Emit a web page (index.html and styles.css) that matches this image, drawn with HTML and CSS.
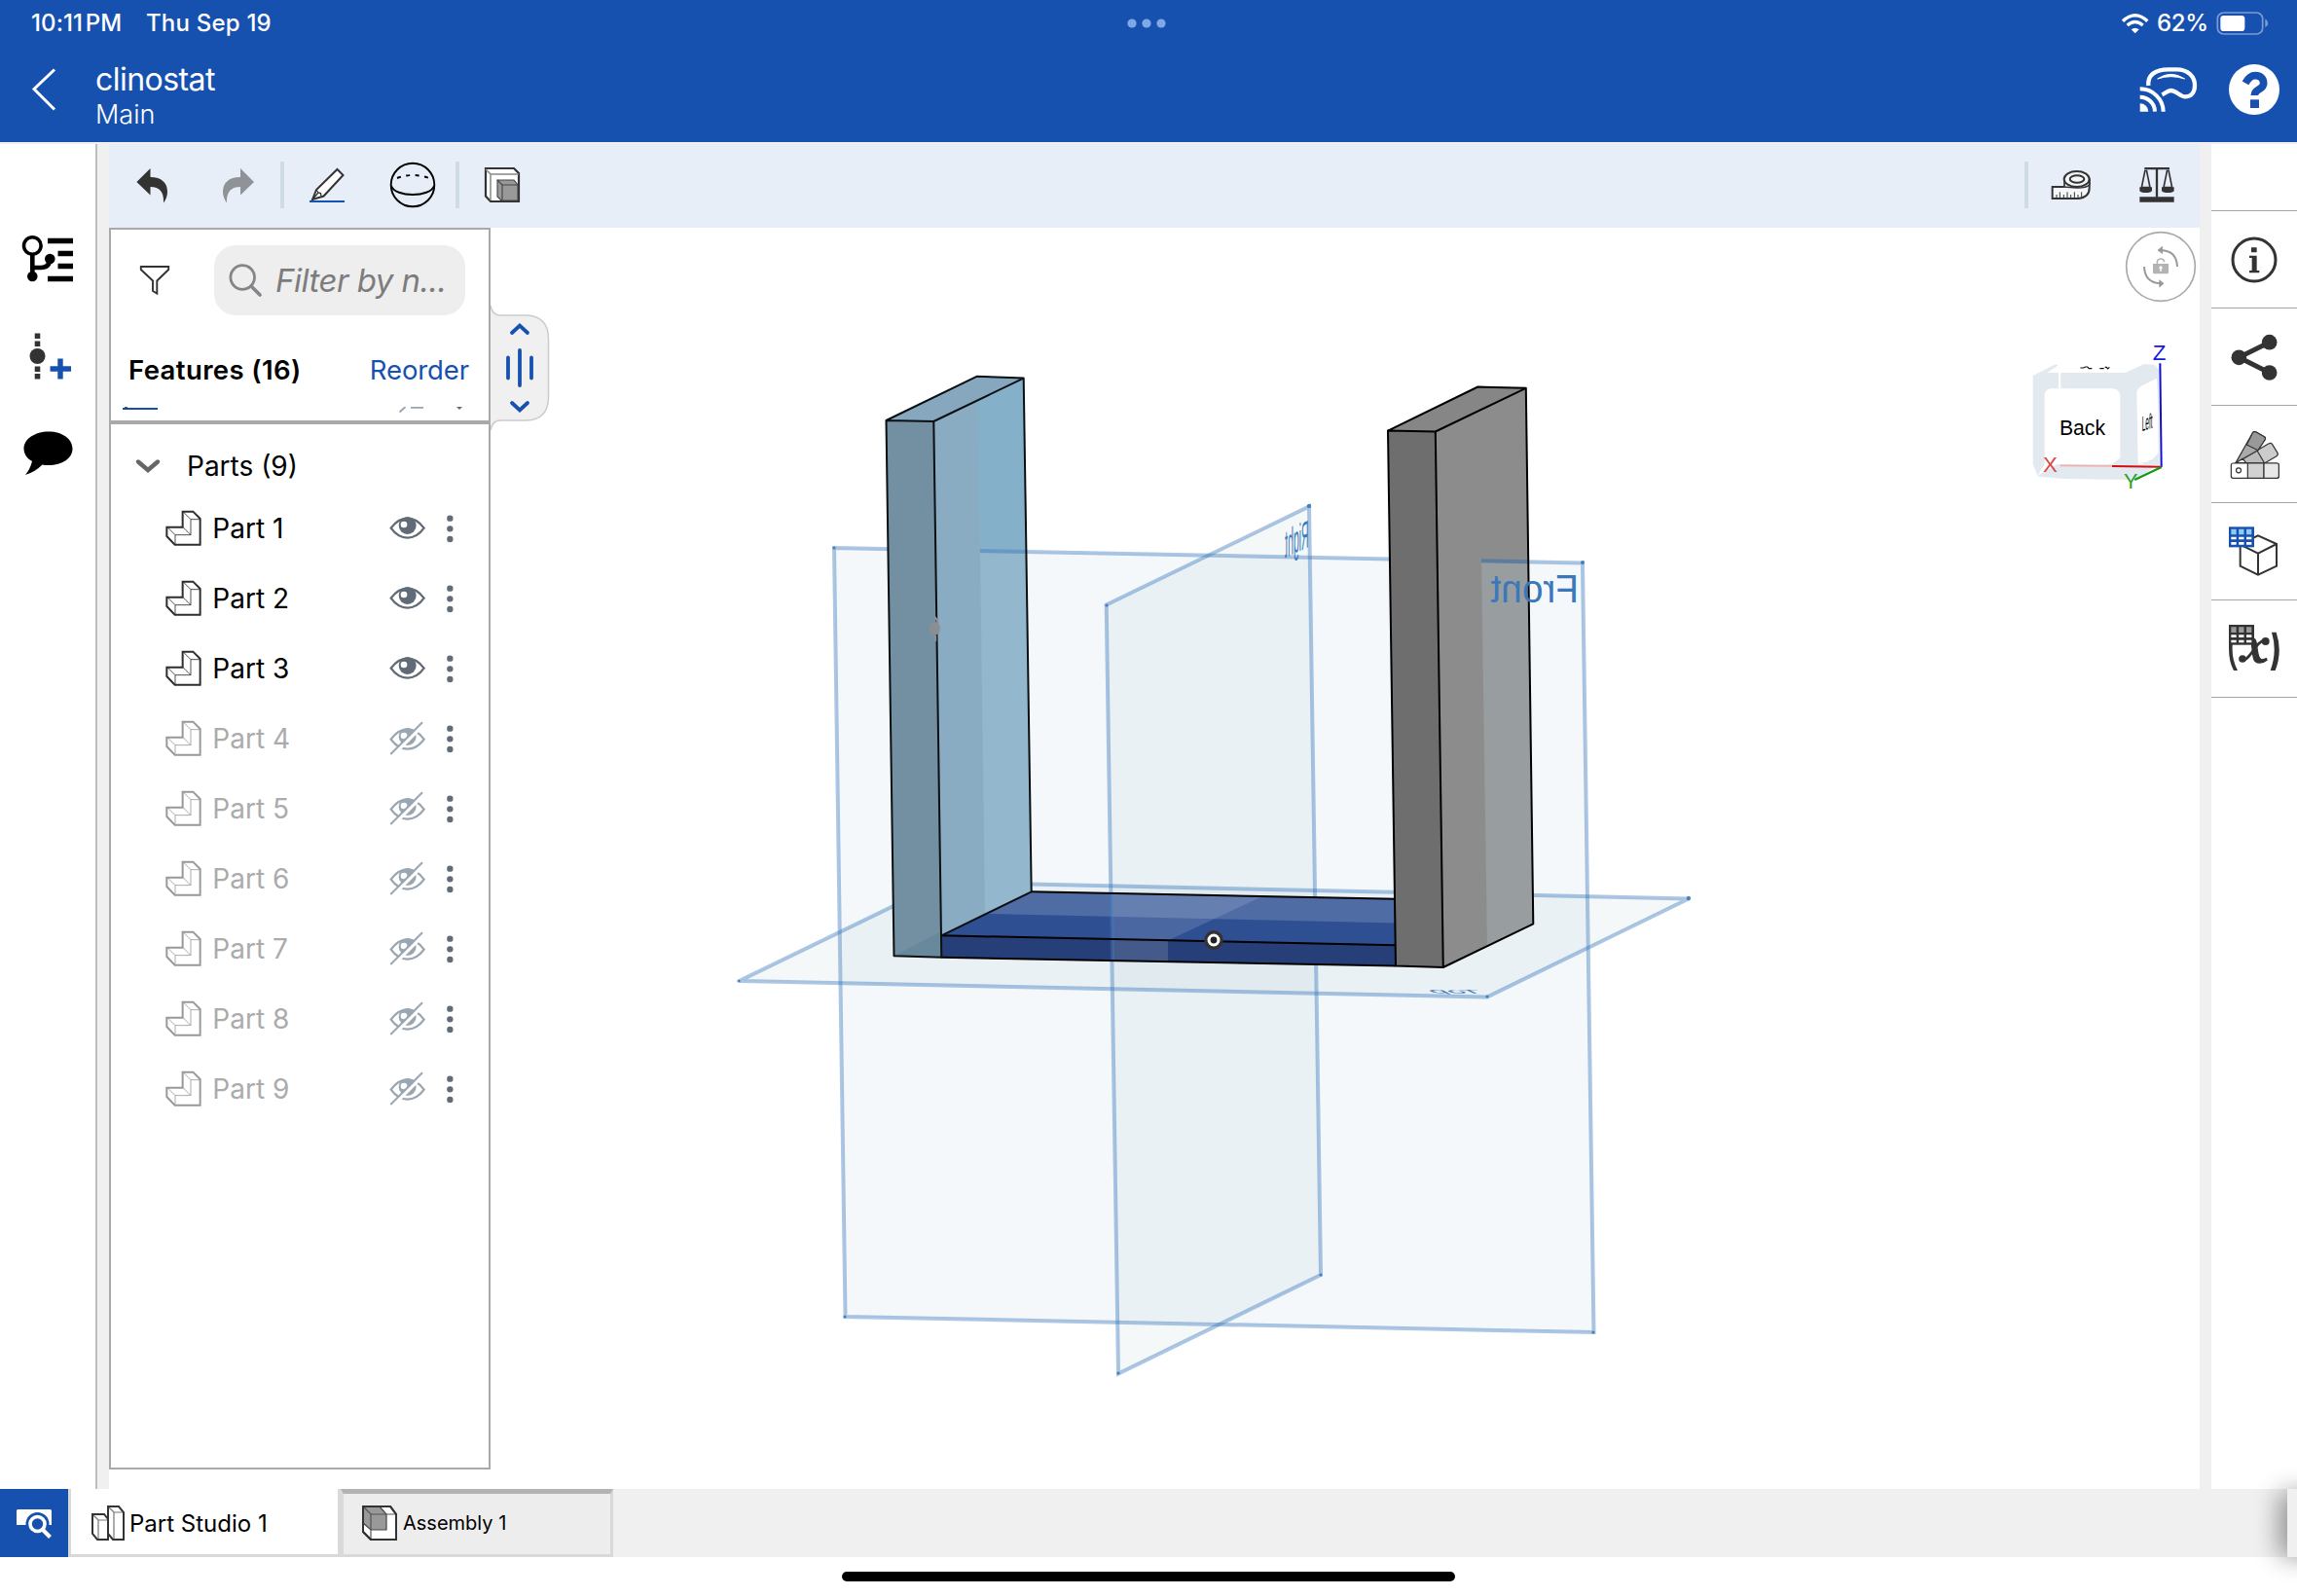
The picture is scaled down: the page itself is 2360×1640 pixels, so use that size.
FILE: index.html
```html
<!DOCTYPE html>
<html lang="en">
<head>
<meta charset="utf-8">
<title>clinostat</title>
<link rel="stylesheet" href="styles.css">
</head>
<body>
<svg class="defs" width="0" height="0">
  <symbol id="part" viewBox="208 250 112 112">
    <path d="M212 303H261V255H293L315 277V357H237L212 331Z" fill="#fff" stroke="currentColor" stroke-width="6"/>
    <path d="M214 303L238 327H286M238 327V355M262 303L286 327M286 327V279H314M286 279L263 256" fill="none" stroke="currentColor" stroke-width="2.5"/>
  </symbol>
  <symbol id="eye" viewBox="898 250 112 112">
    <path d="M903 306Q925 276 954 276T1005 306Q983 336 954 336T903 306Z" fill="#fff" stroke="currentColor" stroke-width="7"/>
    <circle cx="954" cy="298" r="27" fill="currentColor"/>
    <circle cx="943" cy="295" r="10" fill="#fff"/>
  </symbol>
  <symbol id="eye-off" viewBox="898 898 112 112">
    <path d="M903 957Q925 926 954 926T1005 957Q983 987 954 987T903 957Z" fill="#fff" stroke="currentColor" stroke-width="7"/>
    <circle cx="954" cy="949" r="27" fill="currentColor"/>
    <circle cx="943" cy="946" r="10" fill="#fff"/>
    <path d="M907 1009L1006 910" stroke="#fff" stroke-width="10"/>
    <path d="M902 1003L1000 905" stroke="currentColor" stroke-width="6"/>
  </symbol>
  <symbol id="more" viewBox="1070 260 32 92">
    <g fill="#626c78"><circle cx="1086" cy="274" r="9.5"/><circle cx="1086" cy="306" r="9.5"/><circle cx="1086" cy="338" r="9.5"/></g>
  </symbol>
</svg>

<div class="app">
  <header class="header">
    <div class="status">
      <span class="time">10:11 PM</span>
      <span class="date">Thu Sep 19</span>
      <svg class="multitask" width="44" height="12" viewBox="0 0 44 12"><g fill="#7ea8e6"><circle cx="6" cy="6" r="4.600"/><circle cx="21" cy="6" r="4.600"/><circle cx="36" cy="6" r="4.600"/></g></svg>
      <div class="status-end">
        <svg width="30" height="22" viewBox="356 38 88 66">
          <g fill="none" stroke="#fff"><path d="M361 64Q399 28 437 64" stroke-width="10"/><path d="M375 77Q399 56 423 77" stroke-width="10"/></g>
          <path d="M387 90Q399 80 411 90L399 102Z" fill="#fff"/>
        </svg>
        <span class="percent">62%</span>
        <svg width="54" height="24" viewBox="650 36 162 72">
          <rect x="654" y="39" width="139" height="66" rx="19" fill="none" stroke="#7a9cd4" stroke-width="5"/>
          <rect x="663" y="48" width="75" height="48" rx="10" fill="#fff"/>
          <path d="M801 58Q810 64 810 72T801 85Z" fill="#7a9cd4"/>
        </svg>
      </div>
    </div>
    <div class="titlebar">
      <svg class="back" width="28" height="52" viewBox="32 66 28 52"><path d="M56 71.500L35 91.500L56 112.500" fill="none" stroke="#fff" stroke-width="3"/></svg>
      <div class="titles">
        <div class="doc">clinostat</div>
        <div class="branch">Main</div>
      </div>
      <svg class="vr" width="60" height="48" viewBox="415 203 180 144">
        <path d="M443 263C440 232 462 213 505 213H530C566 213 586 236 586 262C586 284 574 297 556 297C540 297 529 278 512 278C502 278 496 286 485 291" fill="none" stroke="#fff" stroke-width="13"/>
        <path d="M471 242Q512 214 555 242Q512 228 471 242Z" fill="#fff" stroke="#fff" stroke-width="3"/>
        <path d="M417 318A26 25 0 0 1 443 343H417Z" fill="#fff"/>
        <path d="M417 298A46 46 0 0 1 463 343M417 273A72 71 0 0 1 489 343" fill="none" stroke="#fff" stroke-width="12"/>
      </svg>
      <svg width="52" height="52" viewBox="690 198 156 156">
        <circle cx="768" cy="276" r="78" fill="#fff"/>
        <path d="M741 256C750 240 760 233 771 233C788 233 797 242 797 257C797 277 769 274 769 294" fill="none" stroke="#1751b0" stroke-width="23"/>
        <path d="M756 307H783V333H756Z" fill="#1751b0"/>
      </svg>
    </div>
  </header>

  <main class="main">
    <nav class="rail rail-left">
      <svg width="54" height="50" viewBox="22 241 54 50">
        <ellipse cx="33.300" cy="252.500" rx="8.800" ry="8.800" fill="none" stroke="#000" stroke-width="3.600"/>
        <path d="M33.300 261V284M33.300 275H42Q51 275 51 266" fill="none" stroke="#000" stroke-width="4.600"/>
        <circle cx="33.300" cy="284" r="5.300"/><circle cx="51.300" cy="266" r="5.300"/>
        <path d="M49 247.500H75M59.500 260.500H75M59.500 273.500H75M49 286.500H75" stroke="#000" stroke-width="5.300"/>
      </svg>
      <svg width="54" height="50" viewBox="22 342 54 50">
        <path d="M35.700 342.500h5.600v5.500h-5.600zM35.700 350.500h5.600v5.500h-5.600zM35.700 376.500h5.600v5.500h-5.600zM35.700 384h5.600v5.500h-5.600z" fill="#333"/>
        <circle cx="38.500" cy="366" r="8" fill="#333"/>
        <path d="M62 368.500V389.500M51.500 379H73" stroke="#1751b0" stroke-width="5.400"/>
      </svg>
      <svg width="54" height="48" viewBox="22 443 54 48">
        <path d="M50 443.500C64 443.500 74.500 451 74.500 461C74.500 471 64 478 50 478Q46 478 43.500 477.500Q36 485 26 488Q31 482 33 474C27.500 471 24.500 466 24.500 461C24.500 451 36 443.500 50 443.500Z"/>
      </svg>
    </nav>

    <section class="workspace">
      <div class="toolbar">
        <svg class="t-undo" width="34" height="40" viewBox="139 171 34 40"><path d="M140.400 188L154.500 174V183C166 183 172 189 172 198Q172 204 168 209.500C168.500 198 164 193 154.500 193V201.500Z" fill="#333"/></svg>
        <svg class="t-redo" width="34" height="40" viewBox="228 170 34 40"><path d="M261 187L247 173V182C235 182 229 188 229 197Q229 203 233 208.500C232.500 197 237.500 192 247 192V200.500Z" fill="#8f9296"/></svg>
        <i class="sep"></i>
        <svg class="t-pencil" width="38" height="38" viewBox="317 171 38 38">
          <path d="M321 205L325 195L346.500 174L352.500 180L332.500 201.500Z" fill="#fff" stroke="#333" stroke-width="2"/>
          <path d="M325 195L327 198L329.500 198.500L330 201.500M321 205L327 198" fill="none" stroke="#333" stroke-width="1.300"/>
          <path d="M318 207H354" stroke="#1751b0" stroke-width="2"/>
        </svg>
        <svg class="t-sphere" width="48" height="48" viewBox="400 166 48 48">
          <g fill="none" stroke="#000" stroke-width="1.900"><circle cx="424" cy="190" r="22.300"/><path d="M402 191C406 203 442 203 446 191"/><path d="M408 183Q424 177 441 183" stroke-dasharray="4 5.500"/></g>
        </svg>
        <i class="sep"></i>
        <svg class="t-block" width="38" height="38" viewBox="497 171 38 38">
          <path d="M499 173H528L533 178V207H504L499 201.500Z" fill="#fff" stroke="#333" stroke-width="2.200"/>
          <path d="M499 174L504 179H533M504 179V206" fill="none" stroke="#888" stroke-width="1.500"/>
          <path d="M511 185H528L532 190V206H515L511 202Z" fill="#999" stroke="#444" stroke-width="1.100"/>
          <path d="M511 185L516 190H532M516 190V206" fill="none" stroke="#444" stroke-width="1.100"/>
        </svg>
        <i class="sep sep-end"></i>
        <svg class="t-tape" width="42" height="32" viewBox="142 522 126 96">
          <path d="M184 576H147V612H228Q261 608 261 580V552" fill="#f4f6fa" stroke="#333" stroke-width="6"/>
          <path d="M184 576V552H261V570Q250 580 222 579Z" fill="#f4f6fa" stroke="#333" stroke-width="5"/>
          <ellipse cx="222" cy="552" rx="39" ry="24" fill="#f4f6fa" stroke="#333" stroke-width="6"/>
          <ellipse cx="223" cy="552" rx="22" ry="11" fill="#f4f6fa" stroke="#333" stroke-width="6"/>
          <path d="M160 600V612M170 592V612M182 600V612M193 592V612M204 600V612M215 592V612M226 600V612M237 592V608" stroke="#333" stroke-width="3"/>
        </svg>
        <svg width="36" height="36" viewBox="414 516 108 108">
          <path d="M430 519H507M468 519V608" stroke="#333" stroke-width="7" fill="none"/>
          <path d="M432 524L421 578H447L436 524M500 524L489 578H515L504 524" fill="none" stroke="#333" stroke-width="5"/>
          <path d="M415 577H453V588Q450 594 434 594T415 588ZM483 577H521V588Q518 594 502 594T483 588ZM415 607H521V623H415Z" fill="#333"/>
        </svg>
      </div>

      <div class="viewport">
        <svg class="scene" width="2148" height="1296" viewBox="112 234 2148 1296">
          <g fill="#5f9cc6" fill-opacity=".07" stroke="#3070b8" stroke-opacity=".4" stroke-width="4">
            <path d="M857 563L1626 578.500L1637.500 1369L868.500 1353Z"/>
            <path d="M1136.700 621.500L1345 520.500L1357 1310L1149 1411.500Z" fill="#7898a8"/>
            <path d="M759.500 1008L968.500 906.500L1735 923.500L1528 1024.500Z" fill="#7898a8"/>
          </g>
          <g fill="#2a6db8" fill-opacity=".8"><circle cx="857" cy="563" r="1.600"/><circle cx="1626" cy="578" r="2"/><circle cx="1345" cy="520" r="2.200"/><circle cx="1137" cy="622" r="1.600"/><circle cx="1735" cy="923" r="2.200"/><circle cx="1528" cy="1024" r="1.600"/><circle cx="759" cy="1008" r="1.600"/><circle cx="1637" cy="1369" r="1.600"/><circle cx="1149" cy="1411" r="1.600"/><circle cx="1357" cy="1310" r="1.600"/><circle cx="868" cy="1353" r="1.600"/></g>
          <g class="plane-name">
            <text transform="matrix(-.26 .12 0 1 1344.500 562)" font-size="40">Right</text>
            <text transform="matrix(-.84 -.01 .3 .14 1526 1021)" font-size="40">Top</text>
          </g>
          <!-- base plate -->
          <path d="M1059.700 916.300L1434 923.800V971.200L967.300 961.300Z" fill="#2f4f93"/>
          <path d="M1059.700 916.300L1434 923.800V948.400L1012 939Z" fill="#4f6ca4"/>
          <path d="M967.300 961.300L1434 971.200V992.600L967.300 983.700Z" fill="#263f78"/>
          <path d="M1142 918L1297 921L1200 966.500V988L1143 987Z" fill="#d8e4f0" fill-opacity=".17"/>
          <path d="M1142 918L1143 987" stroke="#4a80c8" stroke-opacity=".35" stroke-width="4"/>
          <path d="M1059.700 916.300L1434 923.800M967.300 961.300L1434 971.200M967.300 983.700L1434 992.600" fill="none" stroke="#000" stroke-width="2"/>
          <!-- left post -->
          <path d="M910.500 432L959.300 433L967.300 983.700L918.500 982.300Z" fill="#738fa2"/>
          <path d="M918.500 982.300L967.300 957V983.700Z" fill="#68899b"/>
          <path d="M910.500 432L1003.500 386.800L1051.700 388.600L959.300 433Z" fill="#86a7be"/>
          <path d="M959.300 433L1051.700 388.600L1059.700 916.300L967.300 961.300Z" fill="#8aacc2"/>
          <path d="M1004 411.500L1051.700 388.600L1055 567L1007 566Z" fill="#85b0c9"/>
          <path d="M1007 566L1054.500 567L1059.700 916.300L1012 939.500Z" fill="#93b7cc"/>
          <path d="M1007 566L1054.500 567" stroke="#6799c6" stroke-width="4"/>
          <path d="M910.500 432L959.300 433L967.300 983.700L918.500 982.300ZM910.500 432L1003.500 386.800L1051.700 388.600L959.300 433M1051.700 388.600L1059.700 916.300L967.300 961.300" fill="none" stroke="#0a0f12" stroke-width="2" stroke-linejoin="round"/>
          <ellipse cx="960.400" cy="645.700" rx="5.500" ry="7" fill="#8a8f93"/><path d="M960 634Q964 638 963 640M961 653V659" stroke="#8a8f93" stroke-width="2.500"/>
          <!-- right post -->
          <path d="M1426 442.600L1474.800 443.500L1482.800 994L1434 992.600Z" fill="#6e6e6e"/>
          <path d="M1426 442.600L1518.400 397.500L1567.800 398.800L1474.800 443.500Z" fill="#868686"/>
          <path d="M1474.800 443.500L1567.800 398.800L1575.300 949.300L1482.800 994Z" fill="#8c8c8c"/>
          <path d="M1522 576L1570 577L1575.300 949.300L1528 972Z" fill="#989da0"/>
          <path d="M1522 576.300L1570 577.300" stroke="#5d7d9e" stroke-width="4"/>
          <path d="M1426 442.600L1474.800 443.500L1482.800 994L1434 992.600ZM1426 442.600L1518.400 397.500L1567.800 398.800L1474.800 443.500M1567.800 398.800L1575.300 949.300L1482.800 994" fill="none" stroke="#000" stroke-width="2" stroke-linejoin="round"/>
          <g class="plane-name"><text transform="matrix(-.97 0 0 1 1622 619)" font-size="40">Front</text></g>
          <circle cx="1247" cy="966" r="8.200" fill="#fff" stroke="#333" stroke-width="3.400"/><circle cx="1247" cy="966" r="3.400" fill="#222"/>
        </svg>

        <aside class="panel">
          <div class="filter">
            <svg class="funnel" width="34" height="36" viewBox="142 271 34 36"><path d="M144.800 275H173.200V278L161.300 289.500V302.500L157 300V289.500L144.800 278Z" fill="#fff" stroke="#333" stroke-width="1.900"/></svg>
            <div class="search">
              <svg width="34" height="34" viewBox="235 270 34 34"><circle cx="249.200" cy="284" r="12.300" fill="none" stroke="#858589" stroke-width="2.800"/><path d="M258 293L267 302" stroke="#858589" stroke-width="3.600" stroke-linecap="round"/></svg>
              <span class="placeholder">Filter by n...</span>
            </div>
          </div>
          <div class="features-head"><span class="features">Features (16)</span><span class="reorder">Reorder</span></div>
          <svg class="sliver" width="388" height="14" viewBox="114 418 388 14">
            <path d="M126 420H162" stroke="#1751b0" stroke-width="2"/><path d="M128 419H131" stroke="#333" stroke-width="1.500"/>
            <path d="M410.500 423.500L416.500 418M422 418.800H435" stroke="#98a4b0" stroke-width="1.800"/><path d="M469 418H475L472 421Z" fill="#626c78"/>
          </svg>
          <div class="parts-head">
            <svg width="28" height="18" viewBox="138 469 28 18"><path d="M142 473.500L152 482L162 473.500" fill="none" stroke="#666" stroke-width="4.400" stroke-linecap="round"/></svg>
            <span>Parts (9)</span>
          </div>
          <ul class="parts">
            <li><svg class="p"><use href="#part"/></svg><span>Part 1</span><svg class="e"><use href="#eye"/></svg><svg class="m"><use href="#more"/></svg></li>
            <li><svg class="p"><use href="#part"/></svg><span>Part 2</span><svg class="e"><use href="#eye"/></svg><svg class="m"><use href="#more"/></svg></li>
            <li><svg class="p"><use href="#part"/></svg><span>Part 3</span><svg class="e"><use href="#eye"/></svg><svg class="m"><use href="#more"/></svg></li>
            <li class="off"><svg class="p"><use href="#part"/></svg><span>Part 4</span><svg class="e"><use href="#eye-off"/></svg><svg class="m"><use href="#more"/></svg></li>
            <li class="off"><svg class="p"><use href="#part"/></svg><span>Part 5</span><svg class="e"><use href="#eye-off"/></svg><svg class="m"><use href="#more"/></svg></li>
            <li class="off"><svg class="p"><use href="#part"/></svg><span>Part 6</span><svg class="e"><use href="#eye-off"/></svg><svg class="m"><use href="#more"/></svg></li>
            <li class="off"><svg class="p"><use href="#part"/></svg><span>Part 7</span><svg class="e"><use href="#eye-off"/></svg><svg class="m"><use href="#more"/></svg></li>
            <li class="off"><svg class="p"><use href="#part"/></svg><span>Part 8</span><svg class="e"><use href="#eye-off"/></svg><svg class="m"><use href="#more"/></svg></li>
            <li class="off"><svg class="p"><use href="#part"/></svg><span>Part 9</span><svg class="e"><use href="#eye-off"/></svg><svg class="m"><use href="#more"/></svg></li>
          </ul>
        </aside>

        <svg class="handle" width="62" height="132" viewBox="504 312 62 132">
          <path d="M504 314Q506 324 514 324H541Q563.500 325 563.500 348V408Q563.500 431 541 432H514Q506 432 504 442" fill="#f0f0f0" stroke="#ccc" stroke-width="1.500"/>
          <g fill="none" stroke="#1751b0" stroke-width="3.800" stroke-linecap="round"><path d="M526 342L534 334.500L542 342M526 414L534 421.500L542 414M534 360V396M522 367.500V388.500M546 367.500V388.500"/></g>
        </svg>

        <div class="view-tools">
          <svg class="lock" width="74" height="74" viewBox="369 51 222 222">
            <circle cx="480" cy="162" r="106" fill="#fff" stroke="#aaa" stroke-width="5"/>
            <path d="M531 162Q529 113 480 111M429 162Q431 212 480 214" fill="none" stroke="#999" stroke-width="6"/>
            <path d="M471 111L485 100V122ZM489 214L476 203V225Z" fill="#999" stroke="#999" stroke-width="2"/>
            <path d="M456 153H504V180Q504 184 500 184H460Q456 184 456 180Z" fill="#b3b3b3"/><path d="M469 153V148Q470 138 480 138T491 148" fill="none" stroke="#b3b3b3" stroke-width="4.500"/>
            <circle cx="480" cy="165" r="5" fill="#fff"/><path d="M480 165V177" stroke="#fff" stroke-width="4"/>
          </svg>
          <svg class="cube" width="142" height="156" viewBox="78 392 426 468">
            <path d="M86 497L156 462L164 465L130 488H165V536H172V488H370L428 462L460 463L475 478V760L445 790L410 818L385 818L185 815L102 808L86 770Z" fill="#e2e9ef"/>
            <path d="M165 488L190 461H370L410 464L370 488Z" fill="#fff"/>
            <path d="M140 537H335Q355 542 355 560V750L330 770H160L100 806L122 770V555Q124 540 140 537Z" fill="#fff"/>
            <path d="M406 548Q407 538 418 530L468 505Q472 560 472 735L458 752L425 769H410Z" fill="#fff"/>
            <path d="M405 765Q450 770 476 740V775Z" fill="#e2e9ef"/>
            <path d="M232 473H242L248 470H254L259 475H268M292 475H300L305 475M308 471H313L317 476L322 471" fill="none" stroke="#111" stroke-width="3.500"/>
            <text x="168" y="679" font-size="66" textLength="141" lengthAdjust="spacingAndGlyphs">Back</text>
            <text transform="matrix(.3 -.1 0 1 422 669)" font-size="66">Left</text>
            <path d="M478 459L482 779" stroke="#1010d8" stroke-width="6"/>
            <path d="M170 774L330 776" stroke="#f0b0b0" stroke-width="5"/><path d="M330 776L482 778" stroke="#d01010" stroke-width="6"/>
            <path d="M482 779L400 818" stroke="#109a10" stroke-width="6"/>
            <text x="455" y="450" font-size="67" fill="#1818dc">Z</text>
            <text x="117" y="795" font-size="67" fill="#d84848">X</text>
            <text x="366" y="845" font-size="65" fill="#2ca02c">Y</text>
          </svg>
        </div>
      </div>
    </section>

    <nav class="rail rail-right">
      <div class="cell first"></div>
      <div class="cell"><svg width="52" height="52" viewBox="690 62 156 156">
        <circle cx="768" cy="140" r="66" fill="#fff" stroke="#333" stroke-width="9"/>
        <path d="M759 102H776V117H759ZM753 127H776V173H784V180H753V173H761V134H753Z" fill="#333"/></svg></div>
      <div class="cell"><svg width="52" height="52" viewBox="690 362 156 156">
        <path d="M815 394L721 441L815 488" fill="none" stroke="#333" stroke-width="15"/><g fill="#333"><circle cx="721" cy="441" r="23.500"/><circle cx="815" cy="394" r="23.500"/><circle cx="815" cy="488" r="23.500"/></g></svg></div>
      <div class="cell"><svg width="52" height="52" viewBox="390 61 156 156">
        <g stroke="#333" stroke-width="3.600" stroke-linejoin="round">
          <path d="M411 165L512 106Q520 101 524 108L540 134Q543 140 537 144L500 166Z" fill="#ccc"/>
          <path d="M411 165L477 127L500 166Z" fill="#bbb"/>
          <path d="M411 165L463 73Q467 66 474 70L499 84Q505 88 501 94L478 127Z" fill="#aaa"/>
          <path d="M445 109L463 73Q467 66 474 70L499 84Q505 88 501 94L480 126Z" fill="#999"/>
          <path d="M411 165L433 152L443 165Z" fill="#fff"/>
          <rect x="397" y="166" width="147" height="46" rx="6" fill="#fff"/>
          <path d="M448 166H498V212H448Z" fill="#d2d2d2"/><path d="M498 166H538Q544 166 544 172V206Q544 212 538 212H498Z" fill="#e8e8e8"/>
          <circle cx="420" cy="188" r="7.500" fill="#fff"/>
        </g></svg></div>
      <div class="cell"><svg width="52" height="52" viewBox="390 362 156 156">
        <path d="M480 390L537 416V484L480 511L425 484V416ZM425 418L480 445L537 416M480 445V511" fill="#fff" stroke="#333" stroke-width="6"/>
        <path d="M390 363H468V426H390Z" fill="#1751b0"/><path d="M397 370h16v17h-16zM420.500 370h16v17h-16zM444 370h16v17h-16z" fill="#8ccaf5"/>
        <path d="M397 394h16v8h-16zM420.500 394h16v8h-16zM444 394h16v8h-16zM397 410h16v8h-16zM420.500 410h16v8h-16zM444 410h16v8h-16z" fill="#fff"/></svg></div>
      <div class="cell"><svg width="52" height="52" viewBox="390 660 156 156">
        <path d="M402 715Q396 765 417 804H405Q390 778 390 735V715ZM536 686Q556 745 533 804H518Q540 745 522 686Z" fill="#333"/>
        <path d="M454 706H468C478 708 474 738 482 760C485 770 492 774 505 767L507 772C494 783 472 784 467 768C460 745 464 715 454 706Z" fill="#333" stroke="#333" stroke-width="4"/>
        <path d="M430 772C455 778 475 705 505 712" fill="none" stroke="#333" stroke-width="8"/><circle cx="432" cy="768" r="11.500" fill="#333"/><circle cx="503" cy="714" r="12" fill="#333"/>
        <path d="M390 663H468V725H390Z" fill="#333"/><path d="M397 670h16v17h-16zM420.500 670h16v17h-16zM444 670h16v17h-16z" fill="#999"/>
        <path d="M397 694h16v8h-16zM420.500 694h16v8h-16zM444 694h16v8h-16zM397 710h16v8h-16zM420.500 710h16v8h-16zM444 710h16v8h-16z" fill="#fff"/></svg></div>
    </nav>
  </main>

  <footer class="tabs">
    <div class="find"><svg width="40" height="34" viewBox="15 1549 40 34">
      <path d="M18.500 1551H51.500Q53 1551 53 1552.500V1567H17V1552.500Q17 1551 18.500 1551Z" fill="#fff"/>
      <circle cx="38.500" cy="1566" r="12" fill="#1751b0"/><circle cx="38.500" cy="1566" r="7.500" fill="#1751b0" stroke="#fff" stroke-width="3.600"/>
      <path d="M43.500 1571.500L51.500 1579.500" stroke="#fff" stroke-width="4"/></svg></div>
    <div class="tab active">
      <svg width="36" height="38" viewBox="93 1546 36 38">
        <path d="M95 1556H107L111 1561V1582H100L95 1576Z" fill="#fff" stroke="#333" stroke-width="2"/><path d="M96 1557L101 1562H110M101 1562V1581" fill="none" stroke="#777" stroke-width="1.200"/>
        <path d="M111 1548H122L127 1554V1582H116L111 1576Z" fill="#fff" stroke="#333" stroke-width="2"/><path d="M112 1549L117 1554H126M117 1554V1581" fill="none" stroke="#777" stroke-width="1.200"/>
      </svg>
      <span>Part Studio 1</span>
    </div>
    <div class="tab">
      <svg width="38" height="38" viewBox="371 1546 38 38">
        <path d="M373 1548H401L407 1556V1582H381L373 1574Z" fill="#fff" stroke="#333" stroke-width="2"/>
        <path d="M373 1548H390L397 1556V1572H381L373 1565Z" fill="#999" stroke="#444" stroke-width="1.200"/>
        <path d="M373 1548L381 1556H407M381 1556V1581" fill="none" stroke="#555" stroke-width="1.200"/><path d="M373 1574V1548H401L407 1556V1582H381Z" fill="none" stroke="#333" stroke-width="2"/>
      </svg>
      <span>Assembly 1</span>
    </div>
    <div class="edge"></div>
  </footer>
  <div class="home"><i></i></div>
</div>
</body>
</html>
```
FILE: styles.css
```css
* { box-sizing: border-box; }
html, body { margin: 0; padding: 0; }
body { background: #fff; font-family: Inter, "Liberation Sans", sans-serif; color: #000; }
svg { display: block; flex: none; }
.defs { position: absolute; }
.app { width: 2360px; height: 1640px; display: flex; flex-direction: column; overflow: hidden; white-space: nowrap; }

.header { height: 148px; background: #1751b0; border-bottom: 2px solid #f0f0f5; color: #fff; flex: none; }
.status { height: 46px; display: grid; grid-template-columns: 118px 1007px 44px 1fr; align-items: center; padding: 1px 29px 0 32px; font-size: 24px; font-weight: 500; }
.time { letter-spacing: 0.1px; word-spacing: -4px; }
.date { letter-spacing: 0.2px; }
.status-end { display: flex; align-items: center; justify-content: flex-end; }
.percent { margin: 0 8px 0 7px; width: 53px; letter-spacing: -0.3px; }
.titlebar { display: flex; align-items: center; height: 92px; padding: 0 18px 0 32px; }
.titles { margin-left: 38px; padding-top: 18px; height: 92px; flex: 1; }
.doc { font-size: 32px; line-height: 36px; letter-spacing: -0.55px; }
.branch { font-size: 27px; line-height: 36px; font-weight: 300; }
.vr { margin-right: 32px; }

.main { display: flex; height: 1382px; flex: none; background: #f0f0f0; }
.rail { background: #fff; flex: none; }
.rail-left { width: 100px; border-right: 2px solid #bdbdbd; display: flex; flex-direction: column; align-items: center; gap: 51px; padding-top: 93px; }
.rail-right { width: 88px; }
.cell { height: 100px; border-bottom: 1px solid #a6a6a6; display: flex; align-items: center; justify-content: center; }
.cell.first { height: 69px; }
.workspace { flex: 1; margin: 0 12px; display: flex; flex-direction: column; }

.toolbar { height: 86px; background: #e7eef8; display: flex; align-items: center; padding: 0 26px 2px 27px; }
.sep { width: 4px; height: 48px; background: #cfdce5; }
.t-redo { margin: 0 26px 0 55px; }
.t-pencil { margin: 0 45px 0 25px; }
.t-sphere { margin-right: 20px; }
.t-block { margin-left: 25px; }
.sep-end { margin-left: auto; }
.t-tape { margin: 0 49px 0 23px; }

.viewport { flex: 1; background: #fff; display: grid; grid-template-columns: 392px 62px 1fr; grid-template-rows: 1296px; }
.scene { grid-area: 1 / 1 / 2 / 4; }
.scene text, .cube text { font-family: "Liberation Sans", sans-serif; }
.plane-name { fill: #3b78bb; }
.panel { grid-area: 1 / 1; height: 1276px; background: #fff; border: 2px solid #a9a9a9; }
.filter { height: 88px; padding: 16px 24px 0 28px; display: flex; align-items: center; justify-content: space-between; }
.search { width: 258px; height: 72px; border-radius: 22px; background: #eee; display: flex; align-items: center; padding-left: 15px; }
.placeholder { font-size: 33px; font-style: italic; color: #7c7c7c; margin-left: 14px; letter-spacing: -0.5px; }
.features-head { height: 94px; padding: 18px 20px 0 18px; display: flex; align-items: center; justify-content: space-between; font-size: 27.500px; }
.features { font-weight: 600; letter-spacing: 0.4px; }
.reorder { color: #1751b0; letter-spacing: -0.1px; }
.parts-head { border-top: 4px solid #a9a9a9; height: 75px; padding: 14px 0 0 24px; display: flex; align-items: center; gap: 26px; font-size: 28px; }
.parts { list-style: none; margin: 0; padding: 0; }
.parts li { height: 72px; display: flex; align-items: center; padding: 0 34px 0 56px; font-size: 28px; }
.parts span { flex: 1; margin-left: 11px; }
.p, .e { width: 37.300px; height: 37.300px; color: #2e2e2e; }
.e { color: #606b77; }
.m { width: 10.700px; height: 30.700px; margin-left: 20px; }
.off { color: #ababab; }
.off .p { color: #999; }
.off .e { color: #9aa6b2; }
.handle { grid-area: 1 / 2; margin-top: 78px; }
.view-tools { grid-area: 1 / 3; justify-self: end; padding: 3px 3px 0 0; display: flex; flex-direction: column; align-items: flex-end; }
.cube { margin: 40px 29px 0 0; }

.tabs { height: 70px; display: flex; background: #f0f0f0; flex: none; }
.find { width: 70px; background: #1751b0; padding: 19px 0 0 15px; }
.tab { width: 280px; border: 3px solid #d9d9d9; border-top: 5px solid #b3b3b3; background: #ededed; display: flex; align-items: center; padding: 0 0 2px 18px; font-size: 20px; }
.tab svg { margin-right: 5px; }
.tab.active { border-top: 0; background: #fff; font-size: 24px; padding: 3px 0 0 20px; }
.tab.active svg { margin-right: 4px; }
.edge { width: 60px; margin: 0 -50px 0 auto; background: #f0f0f0; box-shadow: -10px 2px 26px -2px rgba(0,0,0,.4); }
.home { flex: 1; display: flex; justify-content: center; padding-top: 15px; }
.home i { width: 630px; height: 10px; border-radius: 5px; background: #000; }
```
